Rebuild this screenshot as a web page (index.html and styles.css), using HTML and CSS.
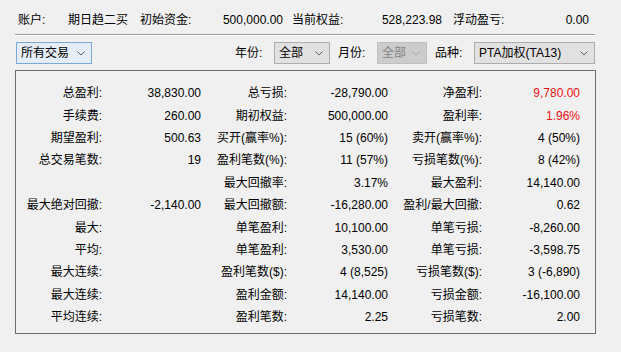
FILE: index.html
```html
<!DOCTYPE html>
<html>
<head>
<meta charset="utf-8">
<link rel="stylesheet" href="styles.css">
</head>
<body>
<div class="top">
  <span class="c1">账户:</span>
  <span class="c2">期日趋二买</span>
  <span class="c3">初始资金:</span>
  <span class="c4 num">500,000.00</span>
  <span class="c5">当前权益:</span>
  <span class="c6 num">528,223.98</span>
  <span class="c7">浮动盈亏:</span>
  <span class="c8 num">0.00</span>
</div>
<div class="sep"></div>
<div class="filters">
  <div class="combo focus w1"><span>所有交易</span><svg class="chev" width="8" height="5" viewBox="0 0 8 5"><polyline points="0.5,0.5 4,4 7.5,0.5" fill="none" stroke="#606060" stroke-width="1"/></svg></div>
  <span class="clabel first">年份:</span>
  <div class="combo w2"><span>全部</span><svg class="chev" width="8" height="5" viewBox="0 0 8 5"><polyline points="0.5,0.5 4,4 7.5,0.5" fill="none" stroke="#606060" stroke-width="1"/></svg></div>
  <span class="clabel">月份:</span>
  <div class="combo disabled w3"><span>全部</span><svg class="chev" width="8" height="5" viewBox="0 0 8 5"><polyline points="0.5,0.5 4,4 7.5,0.5" fill="none" stroke="#a8a8a8" stroke-width="1"/></svg></div>
  <span class="clabel">品种:</span>
  <div class="combo w4"><span>PTA加权(TA13)</span><svg class="chev" width="8" height="5" viewBox="0 0 8 5"><polyline points="0.5,0.5 4,4 7.5,0.5" fill="none" stroke="#606060" stroke-width="1"/></svg></div>
</div>
<div class="panel">
  <span class="l">总盈利:</span><span class="v">38,830.00</span><span class="l">总亏损:</span><span class="v">-28,790.00</span><span class="l">净盈利:</span><span class="v red">9,780.00</span>
  <span class="l">手续费:</span><span class="v">260.00</span><span class="l">期初权益:</span><span class="v">500,000.00</span><span class="l">盈利率:</span><span class="v red">1.96%</span>
  <span class="l">期望盈利:</span><span class="v">500.63</span><span class="l">买开(赢率%):</span><span class="v">15 (60%)</span><span class="l">卖开(赢率%):</span><span class="v">4 (50%)</span>
  <span class="l">总交易笔数:</span><span class="v">19</span><span class="l">盈利笔数(%):</span><span class="v">11 (57%)</span><span class="l">亏损笔数(%):</span><span class="v">8 (42%)</span>
  <span class="l"></span><span class="v"></span><span class="l">最大回撤率:</span><span class="v">3.17%</span><span class="l">最大盈利:</span><span class="v">14,140.00</span>
  <span class="l">最大绝对回撤:</span><span class="v">-2,140.00</span><span class="l">最大回撤额:</span><span class="v">-16,280.00</span><span class="l">盈利/最大回撤:</span><span class="v">0.62</span>
  <span class="l">最大:</span><span class="v"></span><span class="l">单笔盈利:</span><span class="v">10,100.00</span><span class="l">单笔亏损:</span><span class="v">-8,260.00</span>
  <span class="l">平均:</span><span class="v"></span><span class="l">单笔盈利:</span><span class="v">3,530.00</span><span class="l">单笔亏损:</span><span class="v">-3,598.75</span>
  <span class="l">最大连续:</span><span class="v"></span><span class="l">盈利笔数($):</span><span class="v">4 (8,525)</span><span class="l">亏损笔数($):</span><span class="v">3 (-6,890)</span>
  <span class="l">最大连续:</span><span class="v"></span><span class="l">盈利金额:</span><span class="v">14,140.00</span><span class="l">亏损金额:</span><span class="v">-16,100.00</span>
  <span class="l">平均连续:</span><span class="v"></span><span class="l">盈利笔数:</span><span class="v">2.25</span><span class="l">亏损笔数:</span><span class="v">2.00</span>
</div>
</body>
</html>
```
FILE: styles.css
```css
html, body {
  margin: 0;
  padding: 0;
  background: #f0f0f0;
}
body {
  font-family: "Liberation Sans", "Noto Sans CJK SC", sans-serif;
  font-size: 12px;
  color: #000;
  width: 621px;
  height: 352px;
  overflow: hidden;
}
.top {
  display: grid;
  grid-template-columns: 50px 72px 66px 77px 77px 82px 78px 69px;
  padding: 10px 0 0 18px;
  height: 24px;
  line-height: 20px;
  white-space: nowrap;
}
.top .c5 { padding-left: 9px; }
.top .c7 { padding-left: 11px; }
.num { text-align: right; }
.sep {
  margin-left: 15px;
  width: 580px;
  border-top: 1px solid #a0a0a0;
  border-bottom: 1px solid #ffffff;
}
.filters {
  display: flex;
  align-items: center;
  margin-top: 6px;
  padding-left: 16px;
  height: 22px;
}
.combo {
  box-sizing: border-box;
  height: 22px;
  display: flex;
  align-items: center;
  justify-content: space-between;
  padding: 0 6px 0 4px;
  border: 1px solid #adadad;
  background: #e1e1e1;
  line-height: 20px;
  white-space: nowrap;
}
.combo.focus {
  border-color: #7aa8d8;
  background: #e5eef8;
}
.combo.disabled {
  border-color: #bfbfbf;
  background: #cccccc;
  color: #838383;
}
.chev { flex: none; }
.w1 { width: 76px; }
.w2 { width: 56px; }
.w3 { width: 50px; }
.w4 { width: 121px; }
.clabel {
  width: 39px;
  line-height: 20px;
  white-space: nowrap;
}
.clabel.first { margin-left: 143px; }
.w2 + .clabel, .w3 + .clabel { margin-left: 8px; }
.panel {
  box-sizing: border-box;
  margin: 6px 0 0 15px;
  width: 581px;
  height: 264px;
  border: 1px solid #6d6d6d;
  padding-top: 11px;
  display: grid;
  grid-template-columns: 86px 99px 86px 101px 94px 98px;
  grid-auto-rows: 22.4px;
  align-items: center;
  white-space: nowrap;
}
.l, .v {
  text-align: right;
  line-height: 16px;
}
.red { color: #f01010; }
```
